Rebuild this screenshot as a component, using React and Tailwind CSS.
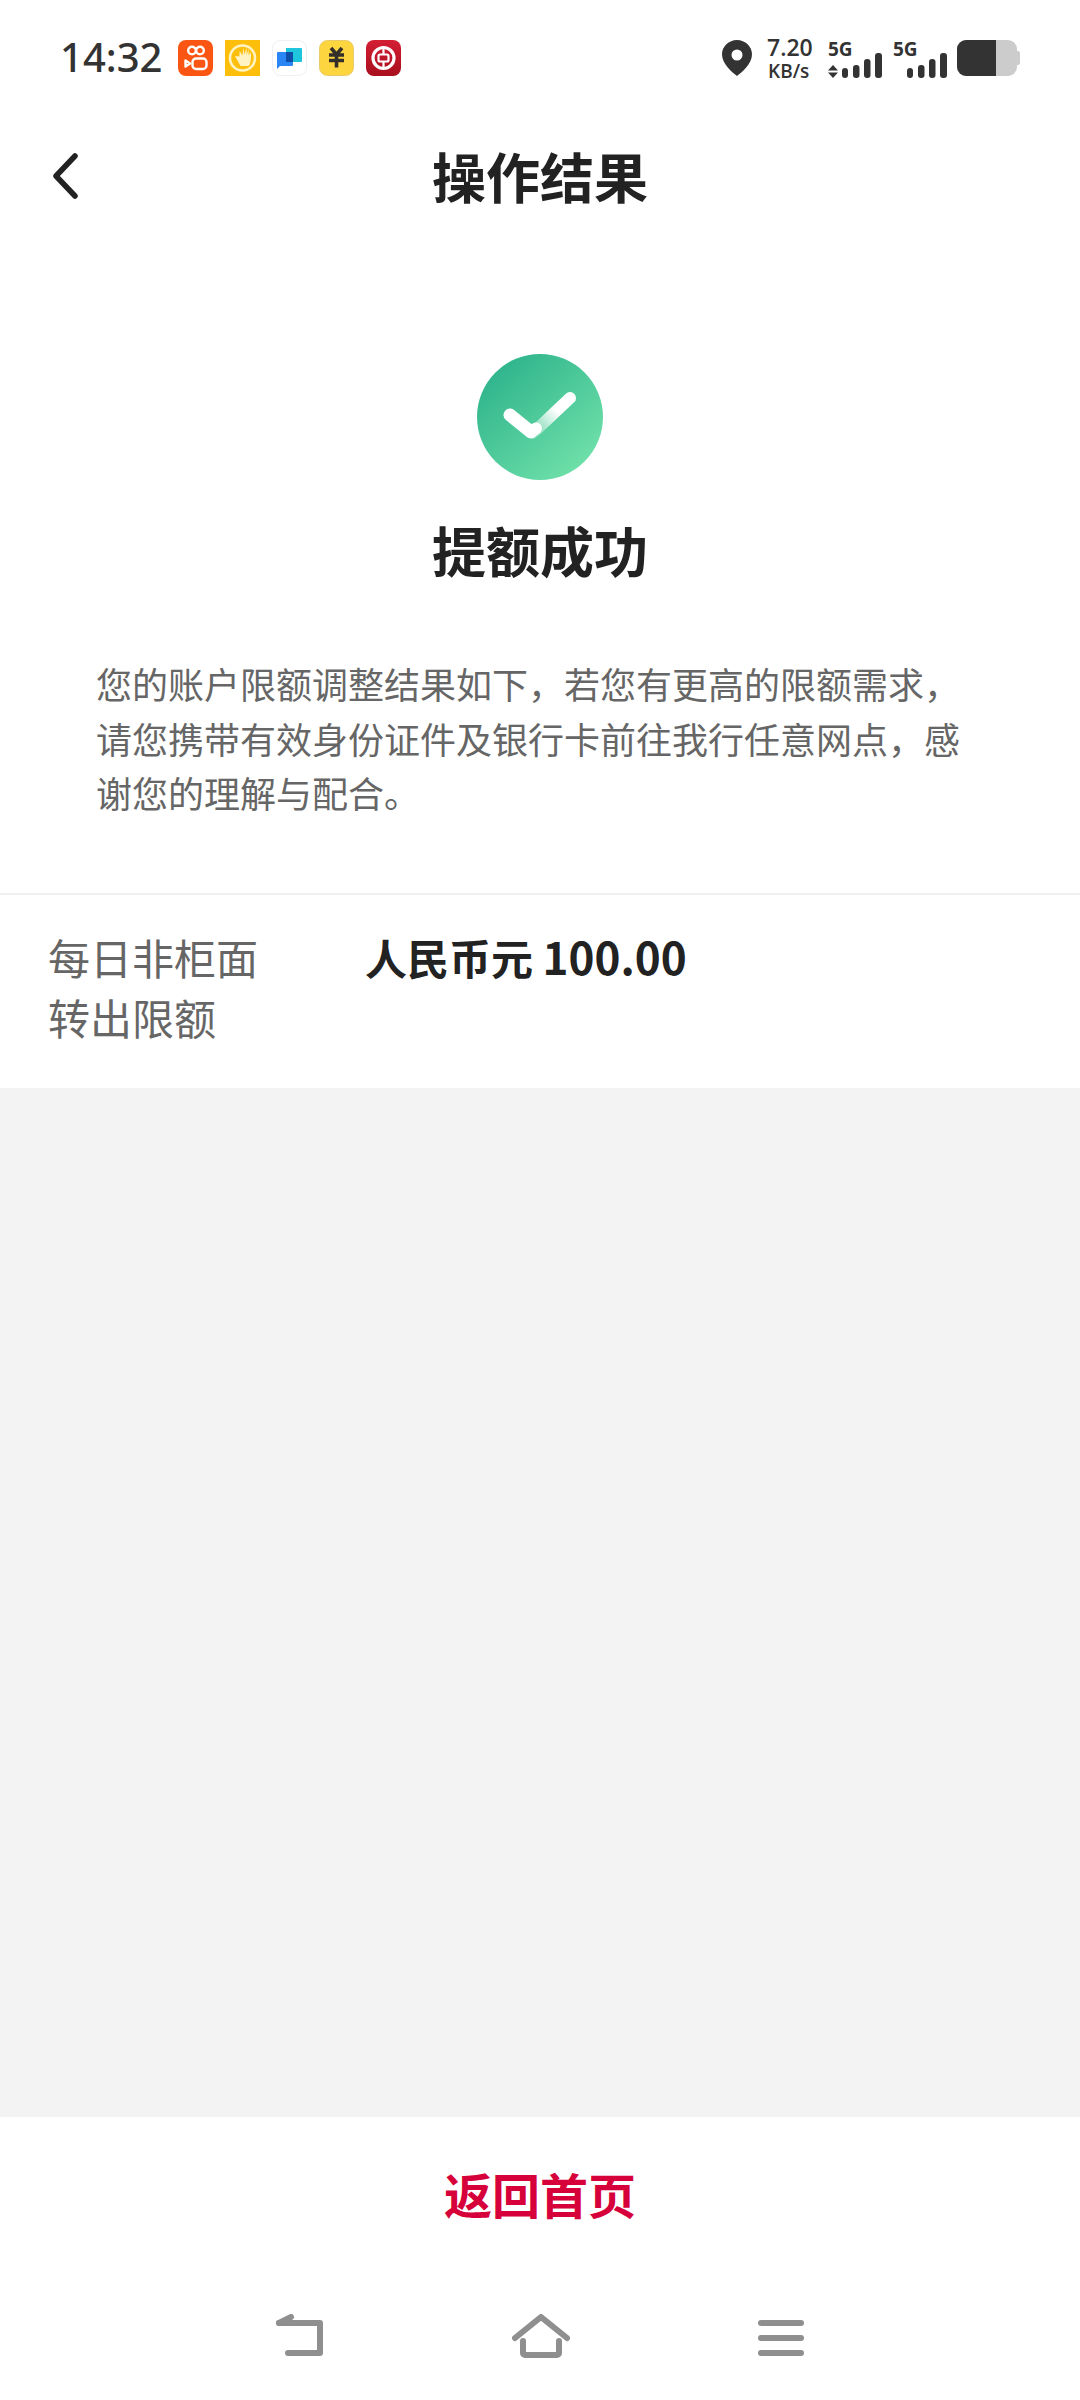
import React from "react";

const cjk = "font-['Noto_Sans_CJK_SC',sans-serif]";

function KuaishouIcon() {
  return (
    <svg width="35" height="36" viewBox="0 0 35 36">
      <rect width="35" height="36" rx="8" fill="#fb5513" />
      <g fill="none" stroke="#fff" strokeWidth="2.4">
        <circle cx="14" cy="10.5" r="3.800" />
        <circle cx="22" cy="10.5" r="3.800" />
        <rect x="14.500" y="18.500" width="14" height="10.500" rx="3.500" />
        <path d="M7.500 20.500l4.500 3-4.500 3z" strokeLinejoin="round" />
      </g>
    </svg>
  );
}

function HandIcon() {
  return (
    <svg width="35" height="36" viewBox="0 0 35 36">
      <rect width="35" height="36" fill="#fdbf0b" />
      <circle cx="17.500" cy="18" r="12.500" fill="none" stroke="#fff3c4" strokeWidth="2.600" />
      <path d="M10 16l5.500 10h8c2-2 2.500-6 2.500-11l-.5-3-1.800 3.500-.2-6.500-1.800 6-.2-7.500-2 7-1.200-6.500-.8 7.500-2.800-4.500-.4 5.500z" fill="#fff3c4" />
    </svg>
  );
}

function ChatIcon() {
  return (
    <svg width="35" height="36" viewBox="0 0 35 36">
      <rect x="0.500" y="0.500" width="34" height="35" rx="8" fill="#fff" stroke="#eeeef4" />
      <path d="M14 8h15a1 1 0 0 1 1 1v12a1 1 0 0 1-1 1H14z" fill="#1ec5dc" />
      <path d="M5 13a1 1 0 0 1 1-1h14a1 1 0 0 1 1 1v12a1 1 0 0 1-1 1H8l-3 3z" fill="#2b86f5" />
      <path d="M14 12h7v10h-7z" fill="#0d4fa8" />
    </svg>
  );
}

function YuanIcon() {
  return (
    <svg width="35" height="36" viewBox="0 0 35 36">
      <rect x="0.500" y="0.500" width="34" height="35" rx="8" fill="#fdd63f" stroke="#eacb6a" />
      <path d="M12 8l5.500 6.500L23 8M10 15h15M10 20.500h15M17.500 14v13.500" fill="none" stroke="#33302a" strokeWidth="3.600" />
    </svg>
  );
}

function BocIcon() {
  return (
    <svg width="35" height="36" viewBox="0 0 35 36">
      <defs>
        <linearGradient id="boc" x1="0" y1="0" x2="0" y2="1">
          <stop offset="0" stopColor="#d41f33" />
          <stop offset="1" stopColor="#a80f1e" />
        </linearGradient>
      </defs>
      <rect width="35" height="36" rx="8" fill="url(#boc)" />
      <circle cx="17.500" cy="18" r="10.500" fill="none" stroke="#fff" strokeWidth="3.200" />
      <rect x="12.500" y="14.500" width="10" height="7" rx="1.500" fill="none" stroke="#fff" strokeWidth="2.200" />
      <path d="M17.500 7v7.500M17.500 21.500V29" stroke="#fff" strokeWidth="2.200" />
    </svg>
  );
}

function Signal({ arrows }) {
  return (
    <svg width="55" height="38" viewBox="0 0 55 38" className="block">
      {arrows && <path d="M5 25l-5 5.500h10zM5 38l-5-5.500h10z" fill="#333" />}
      <rect x="14" y="28" width="6" height="10" rx="3" fill="#333" />
      <rect x="25" y="25" width="6.500" height="13" rx="3" fill="#333" />
      <rect x="36" y="19" width="6.500" height="19" rx="3" fill="#333" />
      <rect x="47" y="13" width="7" height="25" rx="3" fill="#333" />
    </svg>
  );
}

function StatusBar() {
  return (
    <div className="h-[116px] flex items-start pt-[40px] pl-[60px] pr-[60px] text-[#333]">
      <span className="w-[118px] h-[36px] -mt-[1px] text-[40px] leading-[36px] font-medium font-['Noto_Sans',sans-serif]">14:32</span>
      <div className="flex gap-[12px]">
        <KuaishouIcon />
        <HandIcon />
        <ChatIcon />
        <YuanIcon />
        <BocIcon />
      </div>
      <div className="ml-auto flex items-start">
        <svg width="30" height="36" viewBox="0 0 30 36" className="mr-[15px]">
          <path fillRule="evenodd" d="M15 0c8.300 0 15 6.500 15 14.500C30 24 19 33 15 36 11 33 0 24 0 14.500 0 6.500 6.700 0 15 0zm0 9.500a5.500 5.500 0 1 0 0 11 5.500 5.500 0 0 0 0-11z" fill="#333" />
        </svg>
        <div className="w-[61px] flex flex-col font-['Open_Sans',sans-serif] font-semibold">
          <span className="text-[23px] leading-[21px] -mt-[3px]">7.20</span>
          <span className="text-[19px] leading-[18px] mt-[4px] pl-[1px]">KB/s</span>
        </div>
        <div className="relative w-[65px] h-[38px]">
          <span className="absolute left-0 top-[1px] text-[19px] leading-[17px] font-bold font-['Open_Sans',sans-serif]">5G</span>
          <Signal arrows />
        </div>
        <div className="relative w-[64px] h-[38px]">
          <span className="absolute left-0 top-[1px] text-[19px] leading-[17px] font-bold font-['Open_Sans',sans-serif]">5G</span>
          <Signal />
        </div>
        <div className="flex items-center h-[36px]">
          <div className="w-[60px] h-[36px] rounded-[9px] overflow-hidden flex bg-[#cccccc]">
            <div className="w-[39px] bg-[#333333]" />
          </div>
          <div className="w-[3px] h-[14px] rounded-r-[2px] bg-[#cccccc]" />
        </div>
      </div>
    </div>
  );
}

function Header() {
  return (
    <div className="relative h-[124px] flex items-center justify-center pb-[4px]">
      <svg width="26" height="46" viewBox="0 0 26 46" className="absolute left-[52px] top-[37px]">
        <path d="M23 3L4 23l19 20" fill="none" stroke="#222" strokeWidth="5.500" strokeLinecap="round" strokeLinejoin="round" />
      </svg>
      <h1 className="text-[54px] leading-[64px] font-bold text-[#222]">操作结果</h1>
    </div>
  );
}

function SuccessIcon() {
  return (
    <svg width="126" height="126" viewBox="0 0 126 126" className="block">
      <defs>
        <linearGradient id="okBg" x1="0.150" y1="0.100" x2="0.850" y2="0.900">
          <stop offset="0" stopColor="#2fb48c" />
          <stop offset="1" stopColor="#6fe0a9" />
        </linearGradient>
        <linearGradient id="okTail" x1="56" y1="80" x2="93" y2="44" gradientUnits="userSpaceOnUse">
          <stop offset="0" stopColor="#fff" stopOpacity="0.200" />
          <stop offset="0.650" stopColor="#fff" stopOpacity="1" />
        </linearGradient>
      </defs>
      <circle cx="63" cy="63" r="63" fill="url(#okBg)" />
      <path d="M56 79l37-35" fill="none" stroke="url(#okTail)" strokeWidth="12" strokeLinecap="round" />
      <path d="M33 61l21 17" fill="none" stroke="#fff" strokeWidth="13" strokeLinecap="round" />
      <path d="M54 78l5-3.500" fill="none" stroke="#fff" strokeWidth="12" strokeLinecap="round" />
    </svg>
  );
}

export default function App() {
  return (
    <div className={`w-[1080px] h-[2400px] flex flex-col bg-white overflow-hidden ${cjk}`}>
      <StatusBar />
      <Header />

      <div className="flex flex-col items-center pt-[114px]">
        <SuccessIcon />
        <h2 className="mt-[38px] text-[54px] leading-[64px] font-bold text-[#222]">提额成功</h2>
      </div>

      <p className="mt-[74px] pl-[96px] pr-[98px] text-[36px] leading-[54.500px] text-[#666]">
        您的账户限额调整结果如下，若您有更高的限额需求，请您携带有效身份证件及银行卡前往我行任意网点，感谢您的理解与配合。
      </p>

      <div className="mt-[73px] border-t-2 border-[#f0f0f0] flex items-start px-[48px] pt-[31px] h-[195px]">
        <div className="w-[317px] mt-[1px] text-[42px] leading-[60px] text-[#666]">
          <div>每日非柜面</div>
          <div>转出限额</div>
        </div>
        <div className="text-[42px] leading-[60px] font-bold text-[#222]">
          人民币元 <span className="text-[44px]">100.00</span>
        </div>
      </div>

      <div className="flex-1 bg-[#f3f3f3]" />

      <div className="h-[283px] flex flex-col items-center">
        <div className="h-[160px] pb-[8px] flex items-center justify-center text-[48px] font-bold text-[#d6003a]">返回首页</div>
        <div className="flex items-start justify-center gap-[188px] pt-[37px]">
          <svg width="48" height="44" viewBox="0 0 48 44">
            <path d="M3 9h41v30H12" fill="none" stroke="#8f8f8f" strokeWidth="6" strokeLinecap="round" strokeLinejoin="round" />
            <path d="M3 9L15 3" fill="none" stroke="#8f8f8f" strokeWidth="6" strokeLinecap="round" />
          </svg>
          <svg width="58" height="44" viewBox="0 0 58 44">
            <path d="M3 24L29 3l26 21" fill="none" stroke="#8f8f8f" strokeWidth="6" strokeLinecap="round" strokeLinejoin="round" />
            <path d="M11 27v12a2 2 0 0 0 2 2h32a2 2 0 0 0 2-2V27" fill="none" stroke="#8f8f8f" strokeWidth="6" strokeLinecap="round" strokeLinejoin="round" />
          </svg>
          <div className="w-[46px] h-[36px] mt-[6px] flex flex-col justify-between">
            <div className="h-[6px] rounded-full bg-[#8f8f8f]" />
            <div className="h-[6px] rounded-full bg-[#8f8f8f]" />
            <div className="h-[6px] rounded-full bg-[#8f8f8f]" />
          </div>
        </div>
      </div>
    </div>
  );
}
